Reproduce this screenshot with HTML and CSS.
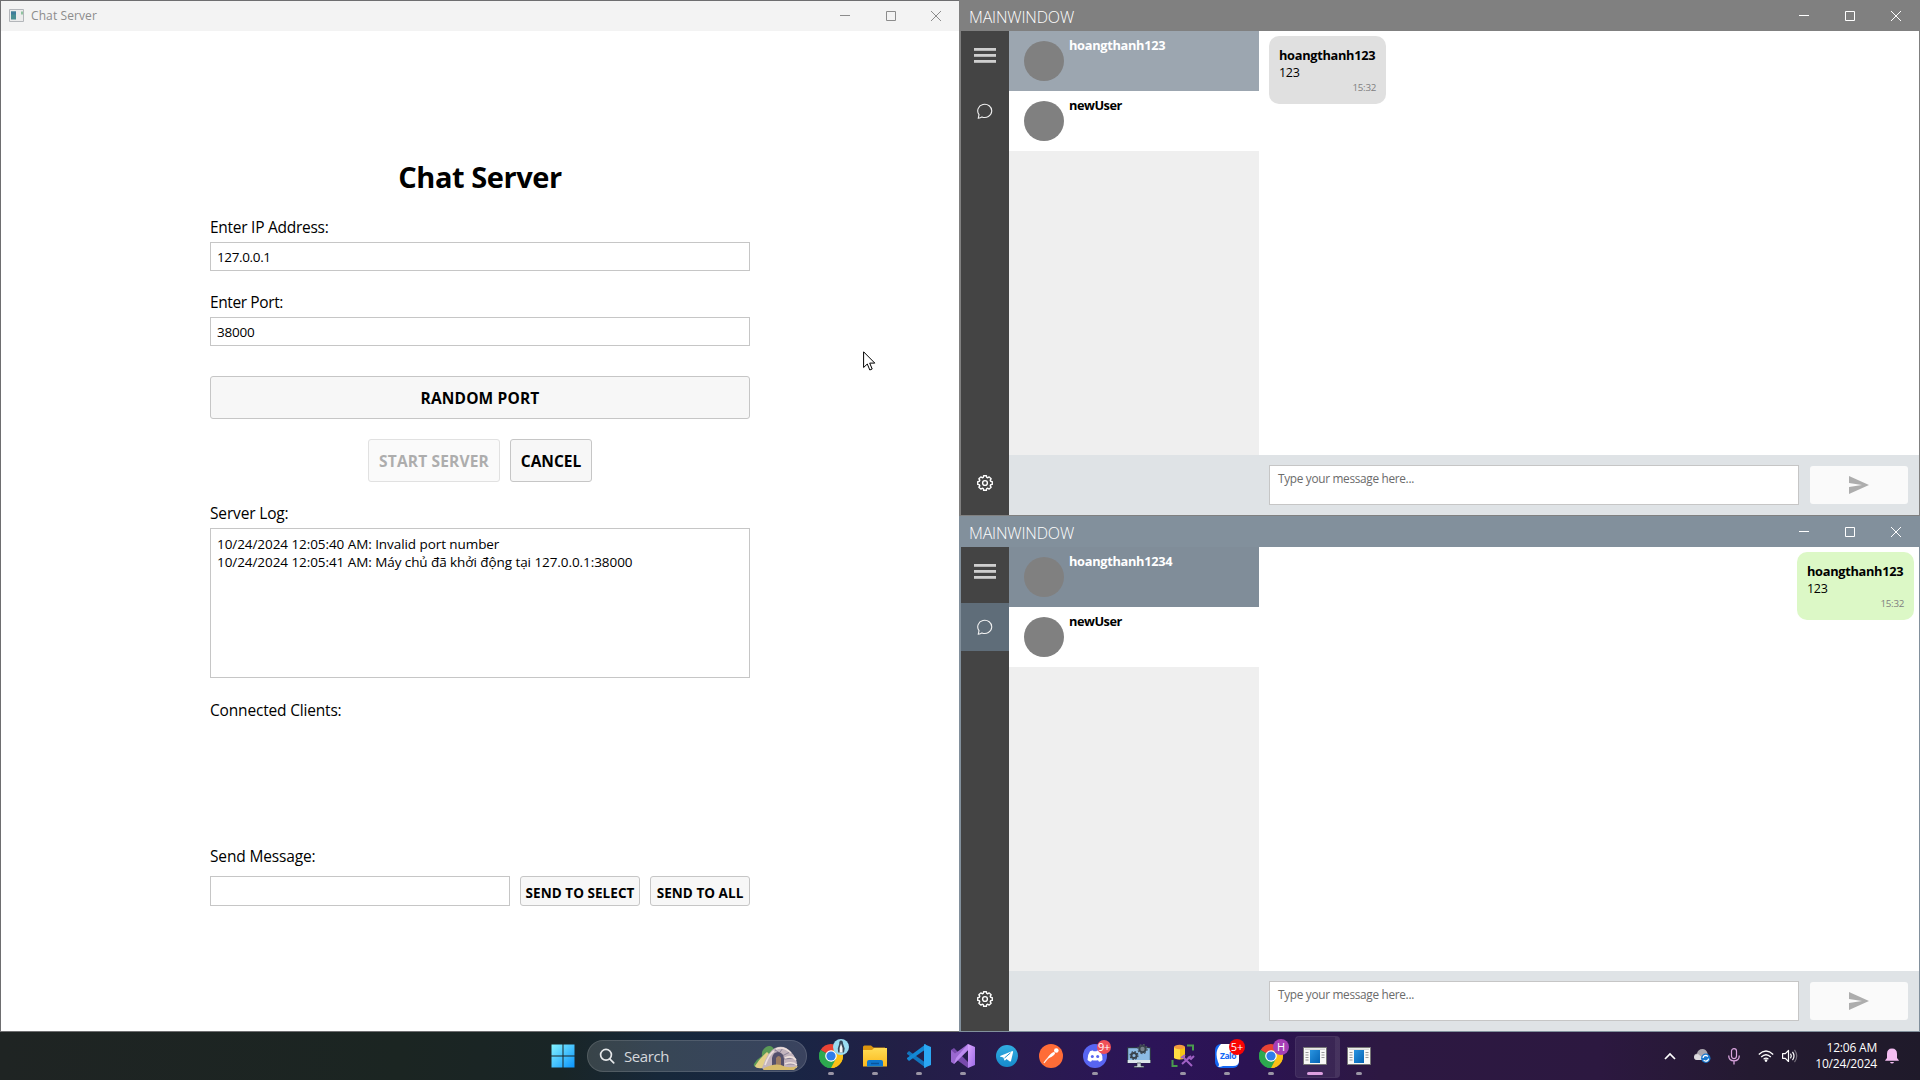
FILE: index.html
```html
<!DOCTYPE html>
<html lang="en">
<head>
<meta charset="utf-8">
<title>Chat Server</title>
<link rel="stylesheet" href="styles.css">
</head>
<body>
<svg width="0" height="0" class="defs" aria-hidden="true">
  <defs>
    <linearGradient id="winlogo" x1="0" y1="0" x2="1" y2="1"><stop offset="0" stop-color="#84f3ff"/><stop offset="1" stop-color="#0a93fb"/></linearGradient>
    <linearGradient id="folder" x1="0" y1="0" x2="0" y2="1"><stop offset="0" stop-color="#ffdc55"/><stop offset="1" stop-color="#fbb81c"/></linearGradient>
    <linearGradient id="bluepane" x1="0" y1="0" x2="1" y2="1"><stop offset="0" stop-color="#2a94e0"/><stop offset="1" stop-color="#0463b4"/></linearGradient>
    <linearGradient id="vs" x1="0" y1="0" x2="1" y2="1"><stop offset="0" stop-color="#dba6ff"/><stop offset="1" stop-color="#9b6ae6"/></linearGradient>
    <linearGradient id="tg" x1="0" y1="0" x2="0" y2="1"><stop offset="0" stop-color="#32aee2"/><stop offset="1" stop-color="#168acb"/></linearGradient>
    <symbol id="i-min" viewBox="0 0 12 12"><path d="M1 5.5h10" stroke="currentColor" fill="none"/></symbol>
    <symbol id="i-max" viewBox="0 0 12 12"><path d="M1.5 1.5h9v9h-9z" stroke="currentColor" fill="none"/></symbol>
    <symbol id="i-close" viewBox="0 0 12 12"><path d="M1 1l10 10M11 1L1 11" stroke="currentColor" fill="none"/></symbol>
    <symbol id="i-menu" viewBox="0 0 22 16"><path d="M0 1.5h22M0 7.5h22M0 13.5h22" stroke="#cfcfcf" stroke-width="3"/><path d="M0 2.5h22M0 8.5h22M0 14.5h22" stroke="#b4b4b4" stroke-width="1"/></symbol>
    <symbol id="i-chat" viewBox="0 0 16 16"><path d="M1.300 15.200L2 11.600A7 6.600 0 1 1 5 13.900Q3.400 15 1.300 15.200Z" fill="none" stroke="#f2f2f2" stroke-width="1.100"/></symbol>
    <symbol id="i-gear" viewBox="0 0 16 16"><path d="M9.400.74L9.730 2.360 10.770 2.790 12.140 1.870 14.130 3.860 13.210 5.230 13.640 6.270 15.260 6.600V9.400L13.640 9.730 13.210 10.770 14.130 12.140 12.140 14.130 10.770 13.210 9.730 13.640 9.400 15.260H6.600L6.270 13.640 5.230 13.210 3.860 14.130 1.870 12.140 2.790 10.770 2.360 9.730.74 9.400V6.600L2.360 6.270 2.790 5.230 1.870 3.860 3.860 1.870 5.230 2.790 6.270 2.360 6.600.74Z" fill="none" stroke="#fff" stroke-width="1.400" stroke-linejoin="round"/><circle cx="8" cy="8" r="2.400" fill="none" stroke="#fff" stroke-width="1.400"/></symbol>
    <symbol id="i-send" viewBox="0 0 20 18"><path d="M0 0L20 9L0 18V11L13 9L0 7Z" fill="#adadad"/></symbol>
    <symbol id="i-chrome" viewBox="0 0 24 24"><path d="M12 12L1.610 6A12 12 0 0 1 22.390 6Z" fill="#ea4335"/><path d="M12 12L22.390 6A12 12 0 0 1 12 24Z" fill="#fbc116"/><path d="M12 12L12 24A12 12 0 0 1 1.610 6Z" fill="#34a853"/><path d="M12 6.500H22.600A12 12 0 0 1 12 24L17 15Z" fill="#fbc116"/><path d="M1.610 6L7 15 12 18 17 14.500 12 24A12 12 0 0 1 1.610 6Z" fill="#2da94f"/><circle cx="12" cy="12" r="5.800" fill="#fff"/><circle cx="12" cy="12" r="4.600" fill="#2f7de9"/></symbol>
    <symbol id="i-app" viewBox="0 0 24 18"><path d="M.5.5h23v17H.5z" fill="#f8f8f6" stroke="#777"/><path d="M2 2.200h20" stroke="#ccc"/><path d="M7 3h10v13H7z" fill="url(#bluepane)"/><path d="M2.500 5.500h3M2.500 8h3M2.500 10.500h3M2.500 13h3M18.500 5.500h3M18.500 8h3M18.500 10.500h3" stroke="#999"/></symbol>
  </defs>
</svg>

<main class="desktop">
  <section class="server-window">
    <header class="titlebar titlebar-light">
      <svg class="app-icon" width="15" height="13" viewBox="0 0 15 13"><path d="M.5.5h14v12H.5z" fill="#ececec" stroke="#b3b6ba"/><path d="M2 2.500h5v8H2z" fill="#4a8f93"/><path d="M2 2.500h5v3H2z" fill="#3f7d9b"/><path d="M12 2.500h2v3h-2z" fill="#8fc3a0"/></svg>
      <h2 class="window-title">Chat Server</h2>
      <div class="window-controls"><svg><use href="#i-min"/></svg><svg><use href="#i-max"/></svg><svg><use href="#i-close"/></svg></div>
    </header>
    <div class="server-form">
      <h1 class="heading">Chat Server</h1>
      <label class="label">Enter IP Address:</label>
      <div class="field ip">127.0.0.1</div>
      <label class="label label-port">Enter Port:</label>
      <div class="field port">38000</div>
      <button class="button random">RANDOM PORT</button>
      <div class="button-row">
        <button class="button start" disabled>START SERVER</button>
        <button class="button cancel">CANCEL</button>
      </div>
      <label class="label label-log">Server Log:</label>
      <div class="log"><p>10/24/2024 12:05:40 AM: Invalid port number</p><p>10/24/2024 12:05:41 AM: Máy chủ đã khởi động tại 127.0.0.1:38000</p></div>
      <label class="label label-clients">Connected Clients:</label>
      <div class="clients"></div>
      <label class="label label-send">Send Message:</label>
      <div class="send-row">
        <div class="send-field"></div>
        <button class="button small select">SEND TO SELECT</button>
        <button class="button small all">SEND TO ALL</button>
      </div>
    </div>
  </section>

  <div class="clients-column">
    <section class="chat-window gray">
      <header class="titlebar">
        <h2 class="chat-title">MAINWINDOW</h2>
        <div class="window-controls"><svg><use href="#i-min"/></svg><svg><use href="#i-max"/></svg><svg><use href="#i-close"/></svg></div>
      </header>
      <div class="chat-body">
        <nav class="rail">
          <div class="rail-menu"><svg width="22" height="16"><use href="#i-menu"/></svg></div>
          <div class="rail-item"><svg width="16" height="16"><use href="#i-chat"/></svg></div>
          <div class="rail-item rail-bottom"><svg width="16" height="16"><use href="#i-gear"/></svg></div>
        </nav>
        <div class="chat-main">
          <div class="chat-panes">
            <ul class="users">
              <li class="user selected"><span class="avatar"></span><b>hoangthanh123</b></li>
              <li class="user"><span class="avatar"></span><b class="new">newUser</b></li>
            </ul>
            <div class="messages"><article class="bubble"><b>hoangthanh123</b><p>123</p><time>15:32</time></article></div>
          </div>
          <footer class="composer"><div class="composer-input">Type your message here...</div><button class="composer-send"><svg width="20" height="18"><use href="#i-send"/></svg></button></footer>
        </div>
      </div>
    </section>

    <section class="chat-window slate">
      <header class="titlebar">
        <h2 class="chat-title">MAINWINDOW</h2>
        <div class="window-controls"><svg><use href="#i-min"/></svg><svg><use href="#i-max"/></svg><svg><use href="#i-close"/></svg></div>
      </header>
      <div class="chat-body">
        <nav class="rail">
          <div class="rail-menu"><svg width="22" height="16"><use href="#i-menu"/></svg></div>
          <div class="rail-item active"><svg width="16" height="16"><use href="#i-chat"/></svg></div>
          <div class="rail-item rail-bottom"><svg width="16" height="16"><use href="#i-gear"/></svg></div>
        </nav>
        <div class="chat-main">
          <div class="chat-panes">
            <ul class="users">
              <li class="user selected"><span class="avatar"></span><b>hoangthanh1234</b></li>
              <li class="user"><span class="avatar"></span><b class="new">newUser</b></li>
            </ul>
            <div class="messages"><article class="bubble own"><b>hoangthanh123</b><p>123</p><time>15:32</time></article></div>
          </div>
          <footer class="composer"><div class="composer-input">Type your message here...</div><button class="composer-send"><svg width="20" height="18"><use href="#i-send"/></svg></button></footer>
        </div>
      </div>
    </section>
  </div>
</main>

<footer class="taskbar">
  <svg class="start-logo" width="24" height="24" viewBox="0 0 24 24"><path d="M.5.500h11v11H.500zM12.500.500h11v11h-11zM.500 12.500h11v11H.500zM12.500 12.500h11v11h-11z" fill="url(#winlogo)"/></svg>
  <div class="search">
    <svg width="16" height="16" viewBox="0 0 16 16"><circle cx="7" cy="6.800" r="5.400" fill="none" stroke="#e6e8ea" stroke-width="1.700"/><path d="M10.700 10.800l4 4" stroke="#e6e8ea" stroke-width="1.700" stroke-linecap="round"/></svg>
    <span>Search</span>
    <svg class="cave" width="46" height="25" viewBox="0 0 46 25"><path d="M1 19Q4 14 9 11Q8 5 13 2Q19-1 22 6L11 22H4Q0 22 1 19Z" fill="#5b9a57"/><path d="M2 21Q6 14 14 7L19 12 10 23Q3 24 2 21Z" fill="#e3cf86"/><path d="M9 23Q15 6 22 3Q31-1 38 7Q45 14 44 23L32 24 10 24Z" fill="#c3b4bd"/><path d="M22 5l5 3M30 3l-3 4M37 7l-8 4M41 13l-10 1M44 19l-12 0" stroke="#8a8297" stroke-width="1"/><path d="M23 4Q31 1 38 8M32 13Q39 10 43 15M32 19Q39 16 44 20M12 20Q16 9 21 6" stroke="#eee0dc" fill="none" stroke-width="1.500"/><path d="M19 21V13Q20 7 25 7Q31 8 31 14V22Z" fill="#54506c"/><path d="M23 20V13Q26 9 28 13V21Z" fill="#9d7d64"/><path d="M11 23Q21 18 28 20Q35 24 45 21L41 25H10Z" fill="#d8bc6c"/></svg>
  </div>
  <div class="apps">
    <div class="app running"><svg width="24" height="24"><use href="#i-chrome"/></svg><span class="badge penguin"><svg width="16" height="16" viewBox="0 0 16 16"><circle cx="8" cy="8" r="8" fill="#9adcf2"/><path d="M8 1.500Q10 1.500 10 4.500L11.700 9.500 11 13.500H5.200L4.800 9.500 6.200 5Q6 1.500 8 1.500Z" fill="#37485b"/><path d="M8 4.500Q10.300 9 9.600 13.500H6.600Q6 9 8 4.500Z" fill="#f5f5f5"/></svg></span></div>
    <div class="app running"><svg width="24" height="22" viewBox="0 0 24 22"><path d="M0 2Q0 .5 1.500.5H8l2.500 2H22v5H0z" fill="#dd960e"/><path d="M0 5H9l2-2H24V21.500H0z" fill="url(#folder)"/><path d="M4 21.500V17q0-2 2-2h12q2 0 2 2v4.500z" fill="#0f78cf"/><path d="M8 18.500h8" stroke="#0a559c" stroke-width="1.500"/></svg></div>
    <div class="app running"><svg width="24" height="24" viewBox="0 0 24 24"><path d="M0 9l2-2L19 19v5L0 10z" fill="#1274bd"/><path d="M0 15l2 2L19 5V0L0 14z" fill="#1388d5"/><path d="M17 0l7 3v18l-7 3z" fill="#2ba7f3"/></svg></div>
    <div class="app running"><svg width="24" height="24" viewBox="0 0 24 24"><path d="M0 6l3-2 14 14v6L4 14.500 0 18z" fill="#784bac"/><path d="M0 18l3 2L17 6V0L4 9.500 0 6z" fill="#9a68d0"/><path d="M17 0l7 3v18l-7 3z" fill="url(#vs)"/><path d="M17 0v6L3 20l2-6z" fill="#bd8bf0"/></svg></div>
    <div class="app"><svg width="22" height="22" viewBox="0 0 22 22"><circle cx="11" cy="11" r="11" fill="url(#tg)"/><path d="M4 11L16.500 6Q17.500 6 17 7.500L15 16Q14.500 17 13.500 16.300L10.500 14 9 15.500Q8 15.500 8 14L7.300 12.500 4 11.500Z" fill="#fff"/><path d="M8.500 13l6-5.200" stroke="#2094ce"/></svg></div>
    <div class="app"><svg width="24" height="24" viewBox="0 0 24 24"><circle cx="12" cy="12" r="12" fill="#ff6c37"/><path d="M5 19Q7 16 10 13L15 9" stroke="#ffe9df" stroke-width="1.200" fill="none"/><path d="M8.500 14.500Q11 9 15 8Q17 9 15 11Q13 13 8.500 14.500Z" fill="#fff"/><circle cx="17.300" cy="6.500" r="2.300" fill="#fff"/></svg></div>
    <div class="app running"><svg width="24" height="24" viewBox="0 0 24 24"><circle cx="12" cy="12" r="12" fill="#5865f2"/><path d="M7 7.300Q9 6.300 10 6.500L10.500 7.300H13.500L14 6.500Q16 6.500 17.500 7.500Q20 12 19.500 16Q17.500 17.800 16 17.700L15 16.200Q12 17 9 16.200L8 17.700Q6 17.500 4.500 16Q4.300 11 7 7.300Z" fill="#fff"/><circle cx="9.300" cy="12.500" r="1.500" fill="#5865f2"/><circle cx="14.700" cy="12.500" r="1.500" fill="#5865f2"/></svg><span class="badge red-soft">9+</span></div>
    <div class="app"><svg width="24" height="24" viewBox="0 0 24 24"><path d="M.7 3.700h22.600v15H.700z" fill="#8dbbe4" stroke="#27313b"/><path d="M.7 16h22.600v3H.700z" fill="#dce5eb"/><path d="M10 19h4v3h3v1.500H7V22h3z" fill="#c9d2d8" stroke="#27313b" stroke-width=".6"/><circle cx="7" cy="11.500" r="2.600" fill="none" stroke="#39434d" stroke-width="2"/><circle cx="7" cy="11.500" r="3.900" fill="none" stroke="#39434d" stroke-width="1.200" stroke-dasharray="1.600 1.460"/><circle cx="15.500" cy="5" r="3.200" fill="#78828c" stroke="#39434d" stroke-width="2"/><circle cx="15.500" cy="5" r="4.600" fill="none" stroke="#4b555f" stroke-width="1.200" stroke-dasharray="1.900 1.700"/></svg></div>
    <div class="app running"><svg width="24" height="24" viewBox="0 0 24 24"><path d="M16 1.500h6v5M1.500 16v6h5" fill="none" stroke="#4a9c4e" stroke-width="2"/><path d="M3 3v11q6 3 11 0V3z" fill="#f6c515"/><path d="M3 3v11q3 1.600 6 1.300V3z" fill="#ffdc44"/><ellipse cx="8.500" cy="3" rx="5.500" ry="2.200" fill="#f39b3e"/><path d="M11 20l9-8M12 13l9 9" stroke="#a060c4" stroke-width="2"/><path d="M10 14l4-3M17 13l3 2 3-3" stroke="#a060c4" stroke-width="2" fill="none"/></svg></div>
    <div class="app running"><svg width="24" height="24" viewBox="0 0 24 24"><rect width="24" height="24" rx="6" fill="#1467f5"/><path d="M6 0h12q6 0 6 6v11q0 5-6 5H8q-2 1-5 1 2-2 0-5Q-1 7 6 0z" fill="#fff"/><text x="13" y="14.500" text-anchor="middle" class="zalo">Zalo</text></svg><span class="badge red">5+</span></div>
    <div class="app running"><svg width="24" height="24"><use href="#i-chrome"/></svg><span class="badge purple">H</span></div>
    <div class="app running focused"><svg width="24" height="18"><use href="#i-app"/></svg></div>
    <div class="app running"><svg width="24" height="18"><use href="#i-app"/></svg></div>
  </div>
  <div class="tray">
    <svg class="t-chevron" width="12" height="8" viewBox="0 0 12 8"><path d="M1 7l5-5 5 5" fill="none" stroke="#fff" stroke-width="1.700"/></svg>
    <svg class="t-cloud" width="17" height="14" viewBox="0 0 17 14"><path d="M3 11Q0 10 0 7.500 0 5 3 4.500 4 0 8.500 0 12 0 13.500 4L14 11Z" fill="#aaa6ad"/><path d="M0 7.500Q1 5 4 5L9 9v2H3Q0 11 0 7.500Z" fill="#dedbe0"/><circle cx="11.800" cy="9.300" r="4.700" fill="#1976cd"/><path d="M9 9q.4-2.600 3-2.600l2 1M14.600 9.600q-.4 2.600-3 2.600l-2-1" stroke="#fff" stroke-width="1.200" fill="none"/></svg>
    <svg class="t-mic" width="12" height="17" viewBox="0 0 12 17"><rect x="3.500" y=".6" width="5" height="10" rx="2.500" fill="none" stroke="#d9a4de" stroke-width="1.200"/><path d="M.7 7.500q0 5.300 5.300 5.300t5.300-5.300M6 12.800V16.500" fill="none" stroke="#d9a4de" stroke-width="1.300"/></svg>
    <svg class="t-wifi" width="16" height="12" viewBox="0 0 16 12"><path d="M.8 4.500q7.200-7 14.400 0M3.200 7q4.800-4.600 9.600 0M5.600 9.200q2.400-2.200 4.800 0" fill="none" stroke="#fff" stroke-width="1.300"/><circle cx="8" cy="10.600" r="1.300" fill="#fff"/></svg>
    <svg class="t-volume" width="16" height="14" viewBox="0 0 16 14"><path d="M.6 4.700h2.700L6.500 1.500v11L3.300 9.300H.6z" fill="none" stroke="#fff" stroke-width="1.200" stroke-linejoin="round"/><path d="M8.500 4.700q1.600 2.300 0 4.600M10.500 2.800q3 4.200 0 8.400" fill="none" stroke="#fff" stroke-width="1.200"/><path d="M12.500.8q4.500 6.200 0 12.400" fill="none" stroke="#76707c" stroke-width="1.200"/></svg>
    <div class="clock"><span>12:06 AM</span><span>10/24/2024</span></div>
    <svg class="t-bell" width="14" height="16" viewBox="0 0 14 16"><path d="M2 10V6q0-5.500 5-5.500T12 6v4l1.800 2.200v.6H.2v-.6zM5 14h4q-.5 1.500-2 1.500T5 14z" fill="#f3bdf1"/></svg>
  </div>
</footer>

<svg class="cursor" width="13" height="21" viewBox="0 0 13 21"><path d="M.6.8v15.700l3.700-3.500 2.500 6 2.400-1-2.500-5.900h5.100z" fill="#fff" stroke="#000" stroke-width="1"/></svg>
</body>
</html>
```
FILE: styles.css
```css
* { box-sizing: border-box; }
body {
  margin: 0;
  width: 1920px;
  height: 1080px;
  overflow: hidden;
  position: relative;
  font-family: "Open Sans", "Noto Sans", sans-serif;
  color: #000;
}
h1, h2, p, ul { margin: 0; padding: 0; }
svg { display: block; flex: none; }
button { font-family: inherit; color: inherit; padding: 0; margin: 0; }
.defs { position: absolute; }

.desktop { display: flex; height: 1032px; }

/* Server window */
.server-window {
  width: 959px;
  border: 1px solid #6e6e70;
  border-right: 0;
  background: #fff;
}
.titlebar {
  display: flex;
  align-items: center;
  height: 30px;
}
.titlebar-light {
  background: #f3f3f3;
  color: #8c8c8c;
  padding-left: 8px;
}
.app-icon { margin-bottom: 2px; }
.window-title {
  margin-left: 7px;
  font-size: 12px;
  line-height: 16px;
  font-weight: 400;
  letter-spacing: 0.1px;
}
.window-controls { display: flex; margin-left: auto; gap: 34px; padding-right: 17px; }
.window-controls svg { width: 12px; height: 12px; }
.titlebar-light .window-controls { gap: 33.5px; margin-bottom: 1px; }

.server-form {
  width: 540px;
  margin: 126px auto 0 209px;
  display: flex;
  flex-direction: column;
}
.heading {
  font-size: 29px;
  line-height: 40px;
  text-align: center;
  letter-spacing: -0.45px;
  margin-bottom: 20px;
}
.label {
  font-size: 15.5px;
  line-height: 20px;
  height: 20px;
  letter-spacing: -0.27px;
  margin-bottom: 5px;
  white-space: nowrap;
}
.label-port { margin-top: 21px; letter-spacing: -0.39px; }
.label-log { margin-top: 21px; letter-spacing: -0.16px; }
.label-clients { margin-top: 22px; margin-bottom: 0; letter-spacing: -0.18px; }
.label-send { margin-bottom: 10px; letter-spacing: -0.15px; }
.clients { height: 126px; }
.field {
  height: 29px;
  border: 1px solid #c6c6c6;
  padding-left: 6px;
  font-size: 13.5px;
  line-height: 28px;
  letter-spacing: -0.22px;
}
.ip { letter-spacing: -0.36px; }
.button {
  border: 1px solid #c6c6c6;
  border-radius: 3px;
  background: #f7f7f7;
  font-size: 15.5px;
  line-height: 20px;
  font-weight: 700;
  white-space: nowrap;
}
.random { height: 43px; margin-top: 30px; letter-spacing: 0.16px; }
.button-row { display: flex; justify-content: center; gap: 10px; margin-top: 20px; }
.start { width: 132px; height: 43px; letter-spacing: 0.17px; color: #adadad; background: #fafafa; border-color: #e1e1e1; }
.cancel { width: 82px; height: 43px; }
.log {
  height: 150px;
  border: 1px solid #c6c6c6;
  padding: 6px;
  font-size: 13.5px;
  line-height: 18px;
  letter-spacing: -0.07px;
  white-space: nowrap;
}
.send-row { display: flex; gap: 10px; }
.send-field { width: 300px; height: 30px; border: 1px solid #c6c6c6; }
.small { height: 30px; font-size: 13.5px; padding-top: 4px; line-height: 18px; letter-spacing: 0.05px; }
.select { width: 120px; }
.all { width: 100px; }

/* Chat clients */
.clients-column { width: 961px; }
.chat-window {
  height: 516px;
  border: 1px solid var(--chrome);
  border-width: 0 1px 1px 2px;
  background: #fff;
}
.gray { --chrome: #808080; --picked: #9ca6b0; }
.slate { --chrome: #82909c; --picked: #808d99; }
.chat-window .titlebar {
  height: 31px;
  background: var(--chrome);
  color: #fff;
  padding-left: 8px;
}
.chat-window .window-controls { padding-right: 17px; }
.chat-title { font-size: 16px; line-height: 22px; font-weight: 300; letter-spacing: -0.16px; padding-top: 2px; }
.chat-body { display: flex; height: 484px; }
.rail { width: 48px; background: #444; display: flex; flex-direction: column; padding-bottom: 8px; }
.rail-menu { height: 56px; display: flex; justify-content: center; padding-top: 17px; }
.rail-item { height: 48px; display: flex; align-items: center; justify-content: center; }
.active { background: #5f6d79; }
.rail-bottom { margin-top: auto; }
.chat-main { flex: 1; display: flex; flex-direction: column; }
.chat-panes { flex: 1; display: flex; }
.users { width: 250px; background: #efefef; list-style: none; }
.user {
  height: 60px;
  display: flex;
  gap: 5px;
  padding: 5px 0 0 15px;
  background: #fff;
  font-size: 12.8px;
  line-height: 18px;
  letter-spacing: -0.3px;
}
.user.selected { background: var(--picked); color: #fff; }
.new { letter-spacing: -0.5px; }
.avatar { width: 40px; height: 40px; margin-top: 5px; border-radius: 50%; background: #808080; }
.messages { flex: 1; display: flex; align-items: flex-start; padding: 5px 5px 0 10px; }
.bubble {
  width: 117px;
  height: 68px;
  border-radius: 10px;
  padding: 10px;
  background: #e0e0e0;
  font-size: 12.8px;
  line-height: 18px;
  letter-spacing: -0.3px;
}
.bubble p { font-size: 12.5px; line-height: 17px; }
.bubble time { display: block; text-align: right; font-size: 9.8px; line-height: 13px; color: #808080; letter-spacing: -0.3px; }
.own { margin-left: auto; background: #dcf8c6; }
.composer {
  height: 60px;
  display: flex;
  align-items: center;
  gap: 11px;
  padding: 0 10px 0 260px;
  background: #dfe3e6;
}
.composer-input {
  width: 530px;
  height: 40px;
  border: 1px solid #c6c6c6;
  background: #fff;
  padding: 4px 8px;
  font-size: 11.8px;
  line-height: 17px;
  letter-spacing: -0.3px;
  color: #6b6b6b;
}
.composer-send {
  width: 98px;
  height: 38px;
  border: 0;
  border-radius: 3px;
  background: #fafafa;
  display: flex;
  align-items: center;
  justify-content: center;
}

/* Taskbar */
.taskbar {
  height: 48px;
  display: flex;
  align-items: center;
  padding-left: 550px;
  background: linear-gradient(90deg, #1f2423 0, #1b2522 400px, #192526 560px, #17283a 660px, #182644 780px, #221f46 900px, #291b4f 1020px, #2c1458 1150px, #2b1353 1250px, #2d1842 1380px, #2c1840 1600px, #241a31 1750px, #1f1a2a 1920px);
  color: #fff;
}
.start-logo { margin-left: .5px; }
.search {
  width: 220px;
  height: 32px;
  margin-left: 12.5px;
  border-radius: 16px;
  border: 1px solid #ffffff20;
  background: #ffffff24;
  display: flex;
  align-items: center;
  padding: 0 7px 0 11px;
  font-size: 15px;
  letter-spacing: -0.4px;
  color: #d5d8dc;
}
.search span { margin-left: 9px; }
.cave { margin-left: auto; margin-top: 3px; }
.apps { display: flex; margin-left: 2px; }
.app {
  width: 44px;
  height: 48px;
  display: flex;
  align-items: center;
  justify-content: center;
  position: relative;
}
.running::after {
  content: "";
  position: absolute;
  left: 19px;
  bottom: 5px;
  width: 6px;
  height: 3px;
  border-radius: 2px;
  background: #9a95a5;
}
.focused::before {
  content: "";
  position: absolute;
  left: 2px;
  top: 4px;
  width: 39px;
  height: 40px;
  border-radius: 4px;
  background: #ffffff12;
  border: 1px solid #ffffff10;
  border-right-width: 5px;
}
.focused svg { position: relative; }
.focused::after { left: 14px; width: 16px; background: #dd9fe0; }
.badge {
  position: absolute;
  left: 24px;
  top: 7px;
  width: 16px;
  height: 16px;
  border-radius: 50%;
  font-size: 11px;
  line-height: 15px;
  text-align: center;
}
.red-soft { left: 24px; top: 8px; width: 14px; height: 14px; line-height: 13px; letter-spacing: -0.4px; background: #ef5058; }
.red { background: #f90404; }
.purple { background: #a63fb6; }
.zalo { font-size: 8.5px; font-weight: 700; fill: #1467f5; letter-spacing: -0.5px; }
.tray { display: flex; align-items: center; margin-left: auto; padding-right: 21px; }
.t-cloud { margin-left: 18px; }
.t-mic { margin-left: 17px; }
.t-wifi { margin-left: 18px; }
.t-volume { margin-left: 8px; }
.clock {
  width: 79px;
  display: flex;
  flex-direction: column;
  text-align: right;
  font-size: 12px;
  line-height: 16px;
  letter-spacing: -0.2px;
}
.t-bell { margin-left: 8px; }

.cursor { position: absolute; left: 863px; top: 351px; }
```
